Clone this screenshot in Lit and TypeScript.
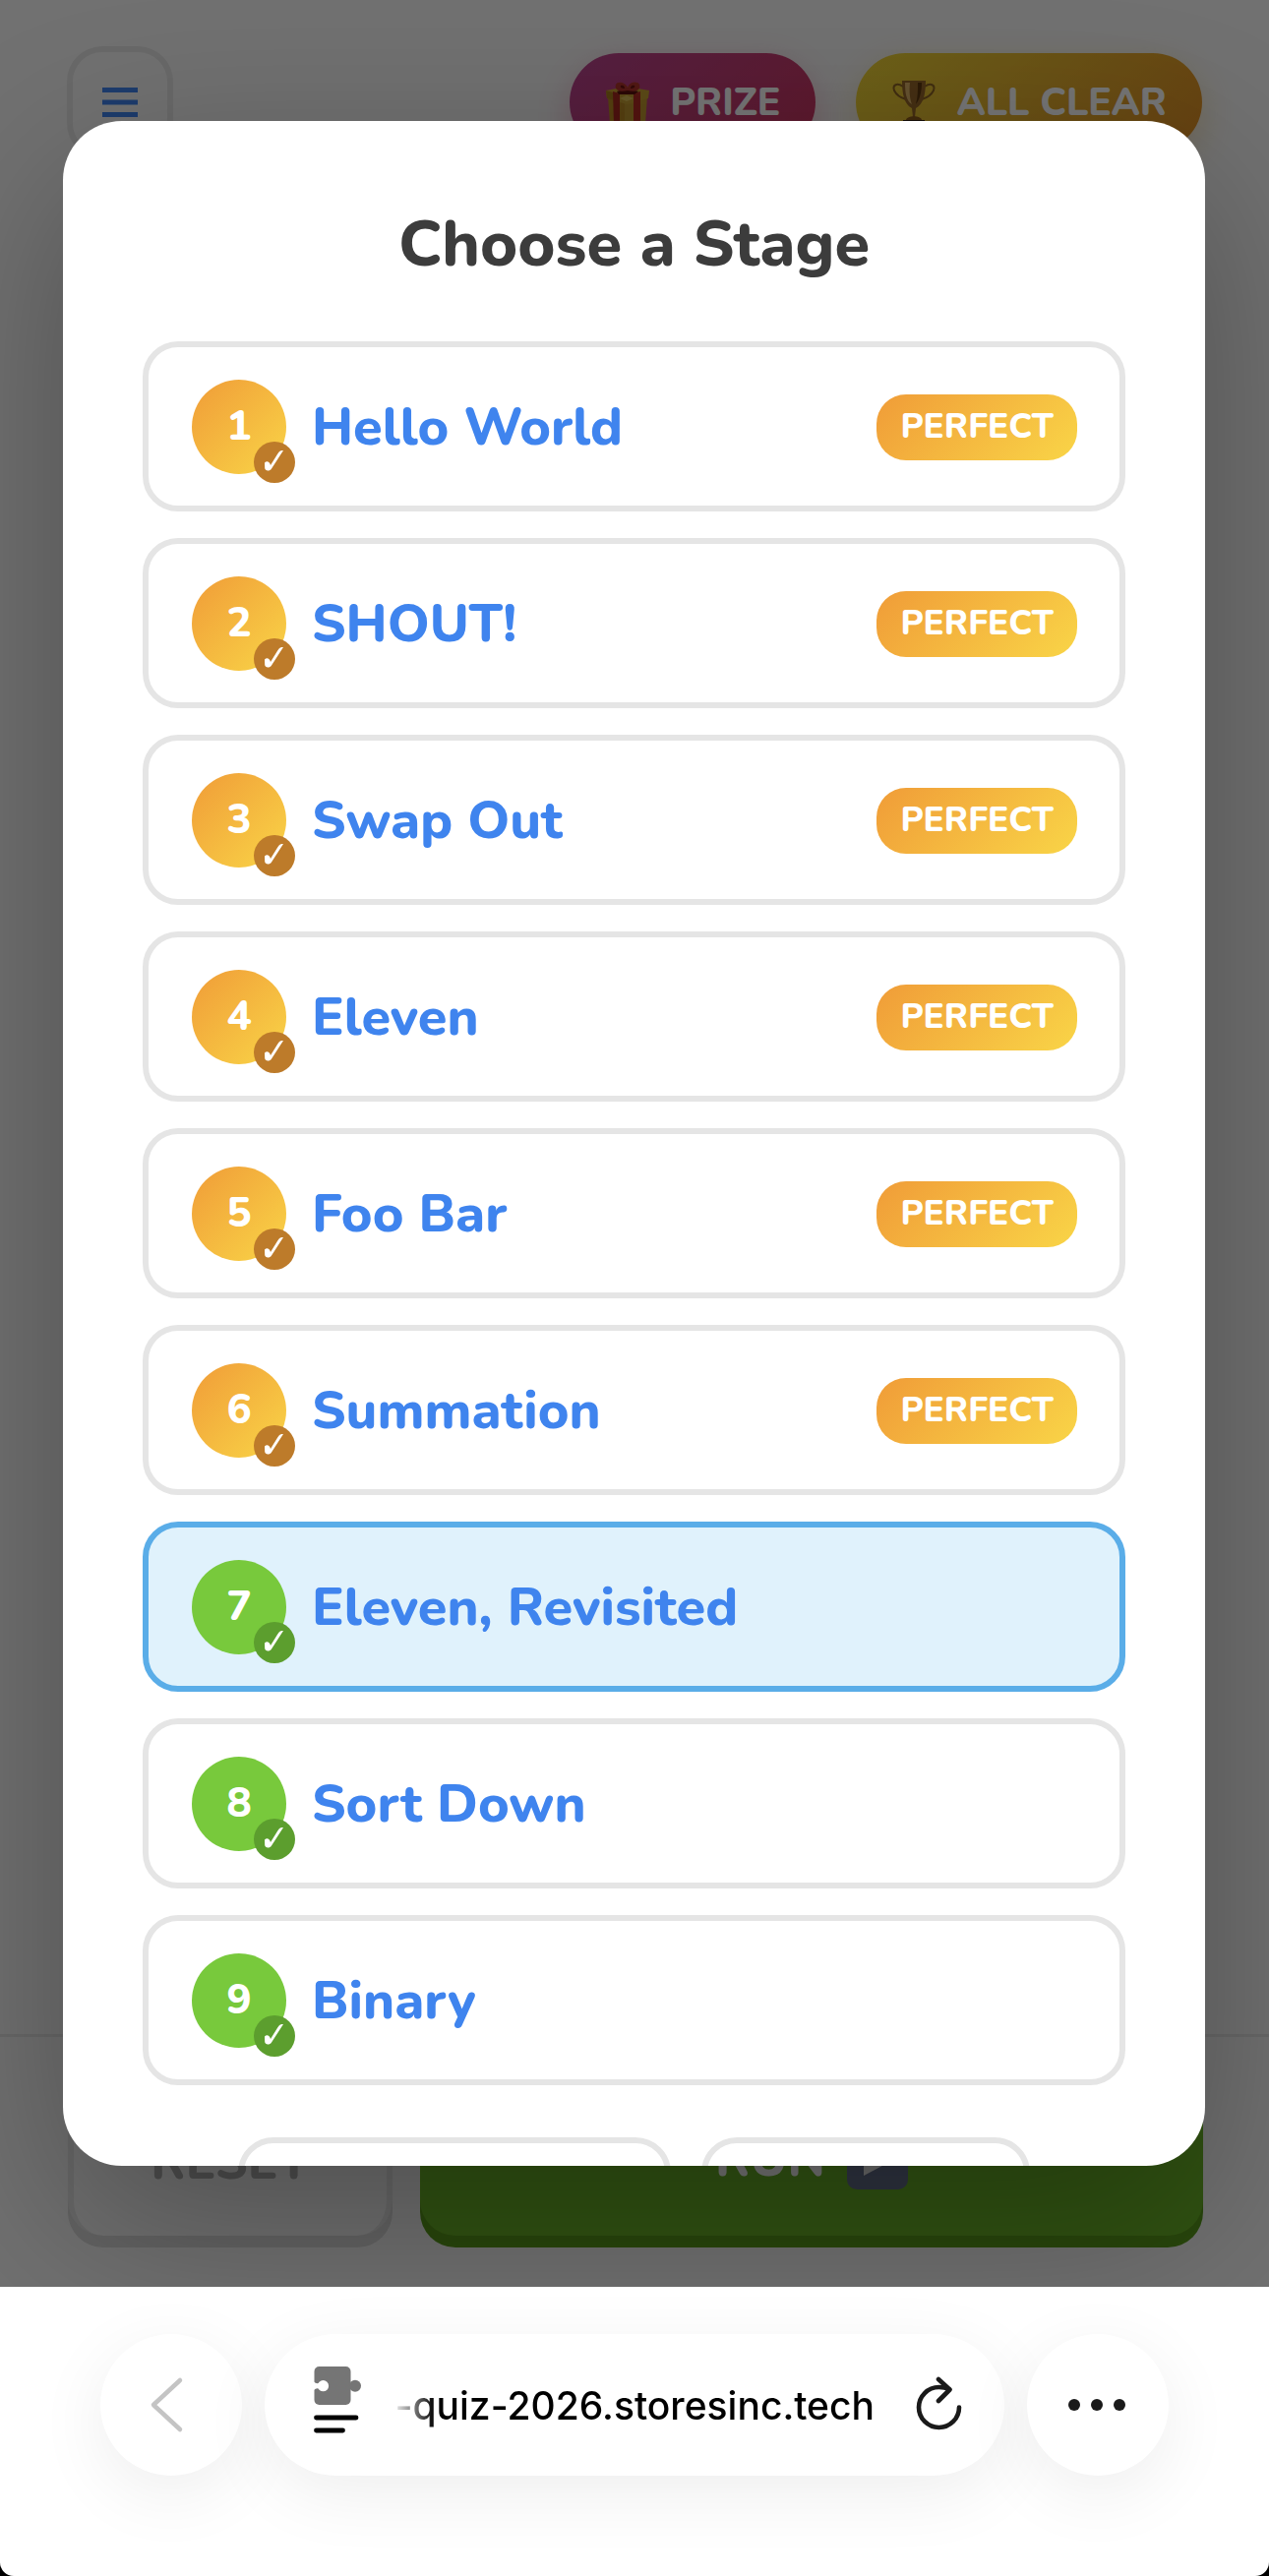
import { LitElement, html, css, svg, nothing } from "lit";
import { customElement, property } from "lit/decorators.js";

interface Stage {
  id: number;
  title: string;
  perfect: boolean;
  current?: boolean;
}

const STAGES: Stage[] = [
  { id: 1, title: "Hello World", perfect: true },
  { id: 2, title: "SHOUT!", perfect: true },
  { id: 3, title: "Swap Out", perfect: true },
  { id: 4, title: "Eleven", perfect: true },
  { id: 5, title: "Foo Bar", perfect: true },
  { id: 6, title: "Summation", perfect: true },
  { id: 7, title: "Eleven, Revisited", perfect: false, current: true },
  { id: 8, title: "Sort Down", perfect: false },
  { id: 9, title: "Binary", perfect: false },
];

const giftIcon = svg`
  <svg class="emoji" viewBox="0 0 46 48" aria-hidden="true">
    <path d="M3 17L20 24V50L5 45Z" fill="#b98a24"/>
    <path d="M20 24L43 17L41 45L20 50Z" fill="#c29a30"/>
    <path d="M1 11L22 7L45 11L44 19L22 25L2 19Z" fill="#c9a135"/>
    <path d="M1 11L15 15V23L2 19Z" fill="#a97c1e"/>
    <path d="M8 12L15 14V48L9 46Z" fill="#a8281f"/>
    <path d="M29 14L36 12V46L29 48Z" fill="#b52c24"/>
    <path d="M12 12L22 9L34 12L30 15H14Z" fill="#5c120e"/>
    <path d="M23 11C16 13 9 11 11 5C13 1 21 3 23 8C25 2 33 1 35 5C37 11 30 13 23 11Z" fill="#b3352c"/>
    <path d="M20 9C17 9 15 8 16 6C18 5 20 6 20 9ZM26 9C29 9 31 8 30 6C28 5 26 6 26 9Z" fill="#6e1512"/>
    <path d="M15 19L22 16L29 19L22 22Z" fill="#dfc05a"/>
  </svg>`;

const trophyIcon = svg`
  <svg class="emoji" viewBox="0 0 46 48" aria-hidden="true">
    <path d="M12 7C6 3 1 5 3 11C5 15 8 18 15 20M34 7C40 3 45 5 43 11C41 15 38 18 31 20" fill="none" stroke="#8e6424" stroke-width="2"/>
    <path d="M11 1H35C35 14 33 25 25 29L24 38H22L21 29C13 25 11 14 11 1Z" fill="#96682a"/>
    <path d="M14 3H19C18 12 19 20 21 25C15 22 14 12 14 3Z" fill="#dcb36a"/>
    <path d="M27 3H31C31 12 29 20 25 25C27 18 27 10 27 3Z" fill="#5e3a10"/>
    <path d="M15 41C16 36 30 36 31 41Z" fill="#8e5c1c"/>
    <path d="M12 41H34V48H12Z" fill="#2e1c10"/>
    <path d="M16 43H30V48H16Z" fill="#d8ceb0"/>
  </svg>`;

@customElement("stage-row")
export class StageRow extends LitElement {
  @property({ attribute: false }) stage!: Stage;

  static styles = css`
    :host {
      display: block;
    }
    .row {
      box-sizing: border-box;
      width: 100%;
      display: flex;
      align-items: center;
      gap: 26px;
      margin: 0;
      padding: 33px 43px 32px 44px;
      border: 6px solid #e5e5e5;
      border-radius: 36px;
      background: #fff;
      font-family: inherit;
      text-align: left;
      cursor: pointer;
    }
    .row.current {
      background: #e0f2fc;
      border-color: #5aade8;
    }
    .number {
      position: relative;
      flex: none;
      width: 96px;
      height: 96px;
      display: grid;
      place-items: center;
      border-radius: 50%;
      background: #78c93c;
      color: #fff;
      font-size: 42px;
      line-height: 48px;
      font-weight: 800;
    }
    .number.perfect {
      background: linear-gradient(135deg, #f09c38, #f9d547);
    }
    .tick {
      position: absolute;
      right: -9px;
      bottom: -9px;
      width: 42px;
      height: 42px;
      border-radius: 50%;
      background: #5c9e2e;
    }
    .perfect .tick {
      background: #bd7b2a;
    }
    .tick svg {
      display: block;
      width: 42px;
      height: 42px;
    }
    .title {
      flex: 1;
      min-width: 0;
      color: #3f84ee;
      font-size: 54px;
      line-height: 72px;
      font-weight: 800;
    }
    .label {
      flex: none;
      padding: 9px 24px 10px;
      border-radius: 30px;
      background: linear-gradient(135deg, #f09c38, #f9d547);
      color: #fff;
      font-size: 35px;
      line-height: 48px;
      font-weight: 800;
    }
  `;

  render() {
    const s = this.stage;
    return html`
      <button class="row ${s.current ? "current" : ""}" type="button">
        <span class="number ${s.perfect ? "perfect" : ""}">
          ${s.id}
          <span class="tick">
            <svg viewBox="0 0 42 42" aria-hidden="true">
              <path d="M11 21.500C13 19.500 16 20 17 24L24.500 12C26 9.500 27.500 9 30 9L18 27.500C16 30.500 11.500 30 11.200 27Z" fill="#fff"/>
            </svg>
          </span>
        </span>
        <span class="title">${s.title}</span>
        ${s.perfect ? html`<span class="label">PERFECT</span>` : nothing}
      </button>
    `;
  }
}

@customElement("browser-bar")
export class BrowserBar extends LitElement {
  static styles = css`
    :host {
      display: block;
      background: #000;
    }
    .bar {
      display: flex;
      align-items: flex-start;
      gap: 23px;
      height: 246px;
      padding: 48px 102px 0;
      background: #fff;
      border-radius: 0 0 14px 14px;
      overflow: hidden;
    }
    .round,
    .address {
      height: 144px;
      border: 0;
      border-radius: 72px;
      background: #fff;
      box-shadow: 0 18px 72px rgba(0, 0, 0, 0.07);
      padding: 0;
    }
    .round {
      flex: none;
      width: 144px;
      display: grid;
      place-items: center;
    }
    .address {
      flex: 1;
      min-width: 0;
      display: flex;
      align-items: center;
      gap: 12px;
      padding: 0 42px 0 49px;
    }
    .plain {
      flex: none;
      display: grid;
      padding: 0;
      border: 0;
      background: none;
    }
    svg {
      display: block;
    }
    .url {
      flex: 1;
      min-width: 0;
      padding: 2px 30px 0 0;
      display: flex;
      justify-content: flex-end;
      color: #000;
      font-family: Inter, "Liberation Sans", sans-serif;
      font-size: 39px;
      line-height: 54px;
      font-weight: 500;
      white-space: nowrap;
      -webkit-mask-image: linear-gradient(90deg, transparent 16px, #000 60px);
      mask-image: linear-gradient(90deg, transparent 16px, #000 60px);
    }
  `;

  render() {
    return html`
      <nav class="bar" aria-label="Browser">
        <button class="round" type="button" aria-label="Back" disabled>
          <svg width="144" height="144" viewBox="0 0 144 144">
            <path d="M81 47L54 72L81 97" fill="none" stroke="#c4c4c4" stroke-width="4.500" stroke-linecap="round" stroke-linejoin="round"/>
          </svg>
        </button>
        <div class="address">
          <button class="plain" type="button" aria-label="Page menu">
            <svg width="52" height="82" viewBox="0 0 52 82">
              <rect x="1.500" y="2" width="37" height="39" rx="5" fill="#757575"/>
              <circle cx="43" cy="21.700" r="6" fill="#757575"/>
              <circle cx="10.500" cy="21.700" r="5.600" fill="#fff"/>
              <path d="M1 17.500Q4 20.500 8 18V25.500Q4 23 1 26Z" fill="#fff"/>
              <path d="M3.500 54H44M3.500 67H30.500" stroke="#000" stroke-width="4.800" stroke-linecap="round"/>
            </svg>
          </button>
          <span class="url">-quiz-2026.storesinc.tech</span>
          <button class="plain" type="button" aria-label="Reload">
            <svg width="48" height="58" viewBox="0 0 48 58">
              <path d="M44 31.500A20.500 20.500 0 1 1 23.500 11Q29 11 34 13M23 3L34.500 13.500L23 25" fill="none" stroke="#1a1a1a" stroke-width="4.600" stroke-linecap="round" stroke-linejoin="round"/>
            </svg>
          </button>
        </div>
        <button class="round" type="button" aria-label="More">
          <svg width="60" height="12" viewBox="0 0 60 12">
            <circle cx="6" cy="6" r="6" fill="#1a1a1a"/>
            <circle cx="29" cy="6" r="6" fill="#1a1a1a"/>
            <circle cx="52" cy="6" r="6" fill="#1a1a1a"/>
          </svg>
        </button>
      </nav>
    `;
  }
}

@customElement("app-root")
export class AppRoot extends LitElement {
  static styles = css`
    :host {
      display: flex;
      flex-direction: column;
      min-height: 100vh;
      font-family: Nunito, "Open Sans", "Noto Sans", sans-serif;
    }
    .page {
      position: relative;
      flex: 1;
      display: flex;
      flex-direction: column;
      overflow: hidden;
      background: #f7f7f7;
    }
    .top {
      display: flex;
      align-items: center;
      gap: 41px;
      padding: 47px 68px 0;
    }
    .menu {
      box-sizing: border-box;
      width: 108px;
      height: 114px;
      margin-right: auto;
      display: grid;
      place-items: center;
      border: 6px solid #e5e5e5;
      border-radius: 36px;
      background: #f7f7f7;
    }
    .pill {
      box-sizing: border-box;
      height: 100px;
      display: flex;
      align-items: center;
      gap: 20px;
      padding: 2px 36px 0;
      border: 0;
      border-radius: 50px;
      color: #fff;
      font-family: inherit;
      font-size: 39px;
      line-height: 54px;
      font-weight: 800;
    }
    .prize {
      background: linear-gradient(135deg, #b8458f, #cc3660);
      box-shadow: 0 12px 36px rgba(220, 60, 110, 0.3);
    }
    .clear {
      background: linear-gradient(135deg, #ecd436, #dd8c26);
      box-shadow: 0 12px 36px rgba(230, 170, 40, 0.3);
    }
    .emoji {
      width: 46px;
      height: 48px;
    }
    .actions {
      display: flex;
      gap: 28px;
      margin-top: auto;
      padding: 46px 67px 52px 69px;
      border-top: 3px solid #e5e5e5;
    }
    .action {
      box-sizing: border-box;
      height: 156px;
      display: flex;
      align-items: center;
      justify-content: center;
      gap: 22px;
      border-radius: 36px;
      font-family: inherit;
      font-size: 51px;
      line-height: 66px;
      font-weight: 800;
    }
    .reset {
      width: 330px;
      border: 6px solid #e5e5e5;
      border-bottom-width: 0;
      background: #f7f7f7;
      color: #afafaf;
      box-shadow: 0 12px 0 #d9d9d9;
    }
    .run {
      flex: 1;
      border: 0;
      background: #6cb528;
      color: #fff;
      box-shadow: 0 12px 0 #5a9c1c;
    }
    .backdrop {
      position: absolute;
      inset: 0;
      display: flex;
      flex-direction: column;
      padding: 123px 65px 123px 64px;
      background: rgba(0, 0, 0, 0.54);
    }
    .modal {
      box-sizing: border-box;
      flex: 1;
      min-height: 0;
      overflow: hidden;
      padding: 81px;
      border-radius: 60px;
      background: #fff;
      box-shadow: 0 60px 180px rgba(0, 0, 0, 0.3);
    }
    .heading {
      margin: 0 0 53px;
      color: #3c3c3c;
      font-size: 65px;
      line-height: 90px;
      font-weight: 800;
      text-align: center;
    }
    .stages {
      display: flex;
      flex-direction: column;
      gap: 27px;
      margin: 0;
      padding: 0;
      list-style: none;
    }
    .more {
      display: flex;
      justify-content: center;
      gap: 31px;
      margin-top: 53px;
    }
    .extra {
      box-sizing: border-box;
      width: 440px;
      height: 132px;
      border: 6px solid #e5e5e5;
      border-radius: 36px;
      background: #fff;
    }
    .extra.short {
      width: 334px;
    }
  `;

  render() {
    return html`
      <div class="page">
        <header class="top">
          <button class="menu" type="button" aria-label="Menu">
            <svg width="36" height="30" viewBox="0 0 36 30">
              <path d="M0 2.500H36M0 15H36M0 27.500H36" stroke="#3f84ee" stroke-width="5"/>
            </svg>
          </button>
          <button class="pill prize" type="button">${giftIcon}<span>PRIZE</span></button>
          <button class="pill clear" type="button">${trophyIcon}<span>ALL CLEAR</span></button>
        </header>
        <footer class="actions">
          <button class="action reset" type="button">RESET</button>
          <button class="action run" type="button">
            <span>RUN</span>
            <svg width="62" height="62" viewBox="0 0 62 62" aria-hidden="true">
              <rect width="62" height="62" rx="10" fill="#66728e"/>
              <path d="M17 14L49 31L17 48Z" fill="#e8e8e8"/>
            </svg>
          </button>
        </footer>
        <div class="backdrop">
          <section class="modal" role="dialog" aria-modal="true" aria-labelledby="heading">
            <h2 class="heading" id="heading">Choose a Stage</h2>
            <ul class="stages">
              ${STAGES.map((s) => html`<li><stage-row .stage=${s}></stage-row></li>`)}
            </ul>
            <div class="more">
              <button class="extra" type="button" aria-label="Tutorial"></button>
              <button class="extra short" type="button" aria-label="Close"></button>
            </div>
          </section>
        </div>
      </div>
      <browser-bar></browser-bar>
    `;
  }
}
